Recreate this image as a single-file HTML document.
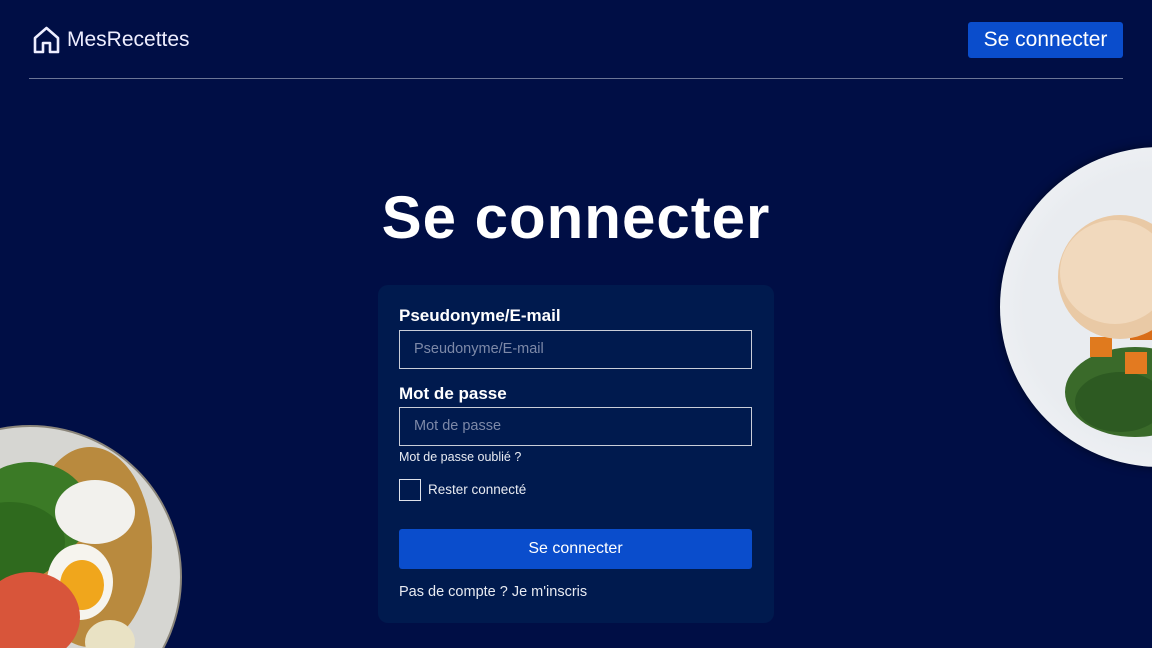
<!DOCTYPE html>
<html><head><meta charset="utf-8"><style>
*{box-sizing:border-box;margin:0;padding:0}
html,body{width:1152px;height:648px;overflow:hidden}
body{background:#000e45;font-family:"Liberation Sans",sans-serif;color:#fff;position:relative}
.hdr{position:absolute;left:29px;right:29px;top:0;height:79px;border-bottom:1px solid #6b7596}
.logo{position:absolute;left:4px;top:26px;display:flex;align-items:center;font-size:21px;color:#eef}
.logo svg{margin-right:7px}
.btn-top{position:absolute;right:0;top:22px;width:155px;height:36px;background:#0a4dcc;border-radius:3px;font-size:21px;display:flex;align-items:center;justify-content:center}
h1{position:absolute;left:0;width:1152px;top:183px;text-align:center;font-size:60px;font-weight:bold;letter-spacing:1px}
.card{position:absolute;left:378px;top:285px;width:396px;height:338px;background:#001a4e;border-radius:10px}
.lbl{position:absolute;left:21px;font-size:17px;font-weight:bold}
.inp{position:absolute;left:21px;width:353px;height:39px;border:1.5px solid #c9cdd8;color:#7d89a8;font-size:14.5px;padding:10px 14px}
.small{position:absolute;left:21px;font-size:12.5px;color:#e8ebf2}
.cb{position:absolute;left:21px;top:194px;width:22px;height:22px;border:1.5px solid #dfe2ea}
.btn{position:absolute;left:21px;top:244px;width:353px;height:40px;background:#0a4dcc;border-radius:3px;font-size:16px;display:flex;align-items:center;justify-content:center}
.clip{position:absolute;left:0;top:0;width:1152px;height:648px;overflow:hidden}
.plate{position:absolute;border-radius:50%;overflow:hidden}
</style></head><body>
<div class="clip">
<div class="plate" style="left:1000px;top:147px;width:320px;height:320px;background:radial-gradient(circle at 50% 50%,#e9ecf0 60%,#f7f8fa 100%);box-shadow:0 0 10px rgba(0,0,0,.5)">
 <svg width="320" height="320" style="position:absolute;left:0;top:0">
  <ellipse cx="135" cy="245" rx="70" ry="45" fill="#3a6a2a"/>
  <ellipse cx="120" cy="255" rx="45" ry="30" fill="#2d5a22"/>
  <rect x="90" y="190" width="22" height="20" fill="#e07a1e"/>
  <rect x="125" y="205" width="22" height="22" fill="#e37a20"/>
  <rect x="130" y="175" width="22" height="18" fill="#d96d18"/>
  <ellipse cx="120" cy="130" rx="62" ry="62" fill="#e9c9a5"/>
  <ellipse cx="115" cy="125" rx="55" ry="52" fill="#f1d9bd"/>
 </svg>
</div>
<div class="plate" style="left:-122px;top:425px;width:304px;height:304px;background:#d6d6d2;border:2px solid #8a857a">
 <svg width="304" height="304" style="position:absolute;left:0;top:0">
  <ellipse cx="210" cy="120" rx="62" ry="100" fill="#b98a3e"/>
  <ellipse cx="150" cy="85" rx="60" ry="50" fill="#3b7a26"/>
  <ellipse cx="130" cy="115" rx="55" ry="40" fill="#2f6a1e"/>
  <ellipse cx="215" cy="85" rx="40" ry="32" fill="#f2f1ed"/>
  <ellipse cx="200" cy="155" rx="33" ry="38" fill="#f6f4ee"/>
  <ellipse cx="202" cy="158" rx="22" ry="25" fill="#f0a61c"/>
  <ellipse cx="150" cy="190" rx="50" ry="45" fill="#d8553a"/>
  <ellipse cx="230" cy="215" rx="25" ry="22" fill="#e9e2c4"/>
 </svg>
</div>
</div>
<div class="hdr">
 <div class="logo"><svg width="27" height="28" viewBox="0 0 27 28"><path d="M2 12 L13.5 2 L25 12 V26 H17 V17 H10 V26 H2 Z" fill="none" stroke="#eef" stroke-width="2.6" stroke-linejoin="round"/></svg>MesRecettes</div>
 <div class="btn-top">Se connecter</div>
</div>
<h1>Se connecter</h1>
<div class="card">
 <div class="lbl" style="top:21px">Pseudonyme/E-mail</div>
 <div class="inp" style="top:45px">Pseudonyme/E-mail</div>
 <div class="lbl" style="top:99px">Mot de passe</div>
 <div class="inp" style="top:122px">Mot de passe</div>
 <div class="small" style="top:165px">Mot de passe oublié ?</div>
 <div class="cb"></div>
 <div class="small" style="left:50px;top:197px;font-size:13.5px">Rester connecté</div>
 <div class="btn">Se connecter</div>
 <div class="small" style="top:299px;font-size:14.5px">Pas de compte ? Je m'inscris</div>
</div>
</body></html>
